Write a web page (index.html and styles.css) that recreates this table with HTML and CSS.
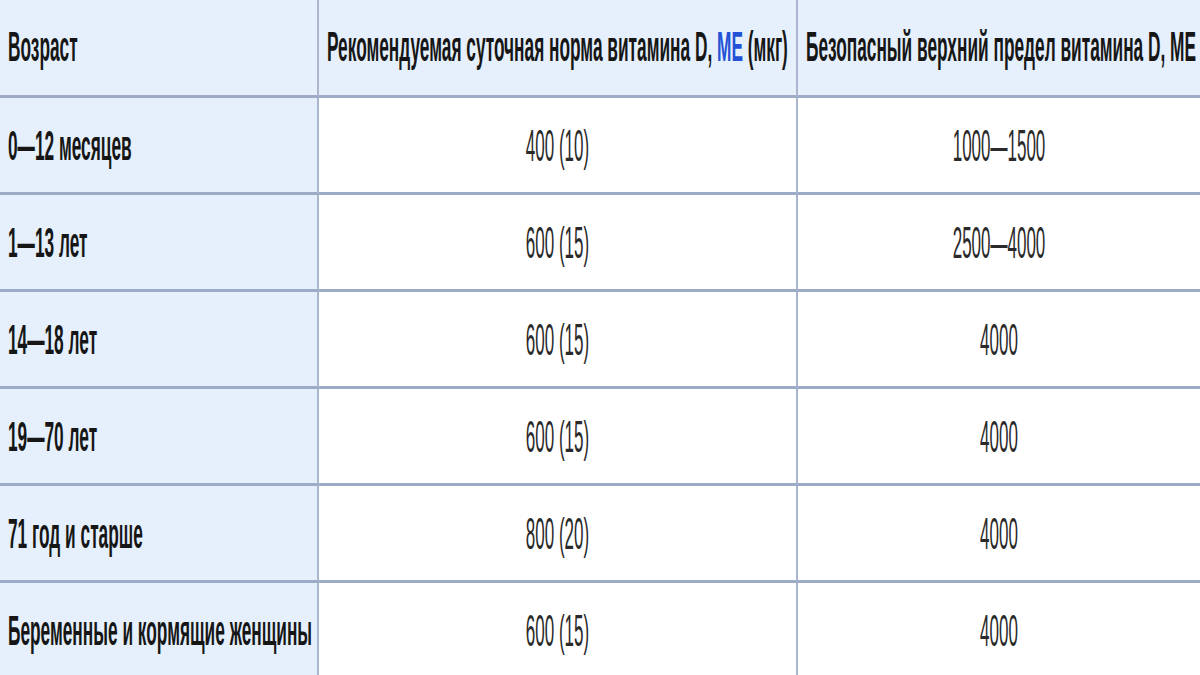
FILE: index.html
```html
<!DOCTYPE html>
<html lang="ru">
<head>
<meta charset="utf-8">
<title>Витамин D</title>
<link rel="stylesheet" href="styles.css">
</head>
<body>
<table class="vt">
  <thead>
    <tr class="head">
      <th class="c1"><span class="t">Возраст</span></th>
      <th class="c2"><span class="t">Рекомендуемая суточная норма витамина D, <a class="lnk">МЕ</a> (мкг)</span></th>
      <th class="c3"><span class="t">Безопасный верхний предел витамина D, МЕ</span></th>
    </tr>
  </thead>
  <tbody>
    <tr><th class="c1"><span class="t">0—12 месяцев</span></th><td class="c2"><span class="d">400 (10)</span></td><td class="c3"><span class="d">1000—1500</span></td></tr>
    <tr><th class="c1"><span class="t">1—13 лет</span></th><td class="c2"><span class="d">600 (15)</span></td><td class="c3"><span class="d">2500—4000</span></td></tr>
    <tr><th class="c1"><span class="t">14—18 лет</span></th><td class="c2"><span class="d">600 (15)</span></td><td class="c3"><span class="d">4000</span></td></tr>
    <tr><th class="c1"><span class="t">19—70 лет</span></th><td class="c2"><span class="d">600 (15)</span></td><td class="c3"><span class="d">4000</span></td></tr>
    <tr><th class="c1"><span class="t">71 год и старше</span></th><td class="c2"><span class="d">800 (20)</span></td><td class="c3"><span class="d">4000</span></td></tr>
    <tr><th class="c1"><span class="t">Беременные и кормящие женщины</span></th><td class="c2"><span class="d">600 (15)</span></td><td class="c3"><span class="d">4000</span></td></tr>
  </tbody>
</table>
</body>
</html>
```
FILE: styles.css
```css
html, body {
  margin: 0;
  padding: 0;
  background: #ffffff;
  overflow: hidden;
}
.vt {
  border-collapse: separate;
  border-spacing: 0;
  width: 1200px;
  table-layout: fixed;
  font-family: "Liberation Sans", Arial, sans-serif;
  color: #1a1a1a;
}
.vt th, .vt td {
  padding: 0 0 0 8px;
  border-bottom: 3px solid #9dabc6;
  vertical-align: middle;
  white-space: nowrap;
  overflow: visible;
}
.vt .c1 { width: 309px; border-right: 2px solid #aab6cf; }
.vt .c2 { width: 469px; border-right: 2px solid #aab6cf; }
.vt .c3 { width: auto; }
.vt tr { height: 97px; }
.vt tr.head { height: 98px; }
.vt th {
  background: #e5f0fc;
  text-align: left;
  font-weight: bold;
  padding-top: 9px;
}
.vt tr.head th {
  padding-top: 5px;
}
.vt td {
  background: #ffffff;
  text-align: center;
  padding: 6px 0 0 0;
}
.t {
  display: inline-block;
  font-size: 17.3px;
  transform: scaleY(2.5);
  transform-origin: 0 60%;
  color: #161616;
}
.d {
  display: inline-block;
  font-size: 17px;
  transform: scaleY(2.6);
  color: #2a2a2a;
}
.lnk {
  color: #2452d6;
  text-decoration: none;
}
```
